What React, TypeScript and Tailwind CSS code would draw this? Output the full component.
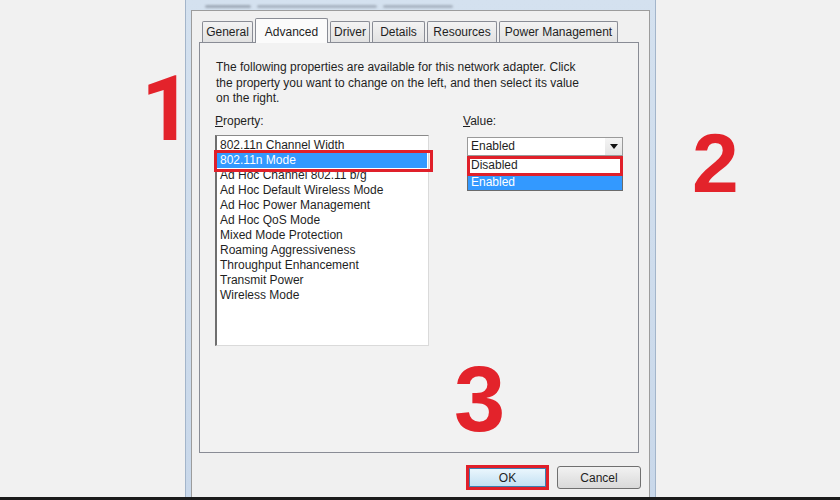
import type { FC } from "react";

const tabs = [
  { label: "General", w: "w-[51px]" },
  { label: "Advanced", w: "w-[73px]", active: true },
  { label: "Driver", w: "w-[40px]" },
  { label: "Details", w: "w-[53px]" },
  { label: "Resources", w: "w-[70px]" },
  { label: "Power Management", w: "w-[119px]" },
];

const properties = [
  "802.11n Channel Width",
  "802.11n Mode",
  "Ad Hoc Channel 802.11 b/g",
  "Ad Hoc Default Wireless Mode",
  "Ad Hoc Power Management",
  "Ad Hoc QoS Mode",
  "Mixed Mode Protection",
  "Roaming Aggressiveness",
  "Throughput Enhancement",
  "Transmit Power",
  "Wireless Mode",
];

const TabStrip: FC = () => (
  <div className="relative z-10 -mb-px flex h-[25px] items-end gap-[2px] pl-[3px]">
    {tabs.map((t) =>
      t.active ? (
        <div
          key={t.label}
          className={`${t.w} flex h-[25px] items-start justify-center rounded-t-[2px] border border-b-0 border-[#898c95] bg-[#fbfbfb] pt-[4px]`}
        >
          {t.label}
        </div>
      ) : (
        <div
          key={t.label}
          className={`${t.w} mb-px flex h-[21px] items-center justify-center rounded-t-[2px] border border-b-0 border-[#898c95] bg-gradient-to-b from-[#f3f3f3] to-[#e2e2e2]`}
        >
          {t.label}
        </div>
      )
    )}
  </div>
);

const PropertyList: FC = () => (
  <div className="flex w-[214px] flex-col">
    <div className="h-[15px] leading-[15px]">
      <span className="underline">P</span>roperty:
    </div>
    <div className="relative mt-[6px] h-[211px] border-l-2 border-t border-r border-b border-l-[#6f6f6f] border-t-[#8a8a8a] border-r-[#dadada] border-b-[#dadada] bg-white pt-[2px]">
      {properties.map((p, i) => (
        <div
          key={p}
          className={`h-[15px] pl-[3px] leading-[15px] ${
            i === 1 ? "mr-px bg-[#3399ff] text-white" : ""
          }`}
        >
          {p}
        </div>
      ))}
      {/* highlight around the selected row */}
      <div className="absolute left-[-3px] top-[14px] h-[22px] w-[219px] border-[3px] border-[#e0202a]" />
    </div>
  </div>
);

const ValueBox: FC = () => (
  <div className="ml-[38px] flex w-[156px] flex-col">
    <div className="-ml-[4px] h-[15px] leading-[15px]">
      <span className="underline">V</span>alue:
    </div>
    <div className="mt-[8px] flex h-[19px] items-center border border-[#9a9a9a] bg-white">
      <div className="flex-1 pl-[3px] leading-[15px]">Enabled</div>
      <div className="flex h-full w-[17px] items-center justify-center bg-gradient-to-b from-[#f4f4f4] to-[#e4e4e4]">
        <svg width="8" height="5" viewBox="0 0 8 5">
          <path d="M0 0 H8 L4 5 Z" fill="#111" />
        </svg>
      </div>
    </div>
    <div className="relative border border-t-0 border-[#6b6b6b] bg-white">
      <div className="h-[19px] pl-[3px] leading-[19px]">Disabled</div>
      <div className="h-[15px] bg-[#3399ff] pl-[3px] leading-[15px] text-white">Enabled</div>
      <div className="absolute left-[-1px] top-0 h-[20px] w-[156px] border-[3px] border-[#e0202a]" />
    </div>
  </div>
);

const Dialog: FC = () => (
  <div className="flex h-full w-[471px] flex-col border-x border-[#a3b5ca] bg-gradient-to-b from-[#d4e1ef] to-[#c9d8ea] px-[5px]">
    {/* title bar, mostly cropped away */}
    <div className="flex h-[10px] items-end gap-[6px] pb-[2px] pl-[14px]">
      <div className="h-[3px] w-[46px] rounded-full bg-[#7d8794] opacity-60 blur-[1px]" />
      <div className="h-[3px] w-[120px] rounded-full bg-[#7d8794] opacity-50 blur-[1px]" />
      <div className="h-[3px] w-[70px] rounded-full bg-[#7d8794] opacity-50 blur-[1px]" />
    </div>
    <div className="flex flex-1 flex-col border border-b-0 border-[#9c9c9c] bg-[#f0f0f0]">
      <div className="ml-[7px] mr-[10px] mt-[7px] flex flex-col">
        <TabStrip />
        <div className="flex h-[411px] flex-col border border-[#898c95] bg-[#f2f2f2] pl-[15px] pt-[17px]">
          <p className="pl-px leading-[15.5px]">
            The following properties are available for this network adapter. Click
            <br />
            the property you want to change on the left, and then select its value
            <br />
            on the right.
          </p>
          <div className="mt-[7px] flex">
            <PropertyList />
            <ValueBox />
          </div>
        </div>
        <div className="-mr-[2px] mt-[12px] flex items-center justify-end gap-[8px]">
          <div className="h-[25px] w-[83px] border-[3px] border-[#e0202a]">
            <button className="flex h-full w-full items-center justify-center border border-[#3c7fb1] bg-gradient-to-b from-[#eaf6fd] to-[#c4e1f3] leading-none">
              OK
            </button>
          </div>
          <button className="flex h-[23px] w-[84px] items-center justify-center rounded-[3px] border border-[#707070] bg-gradient-to-b from-[#f2f2f2] to-[#d9d9d9] leading-none">
            Cancel
          </button>
        </div>
      </div>
    </div>
  </div>
);

export default function App() {
  return (
    <div className="relative flex h-[500px] w-[840px] flex-col overflow-hidden bg-[#f1f1f1] font-['Liberation_Sans',Arial,sans-serif] text-[12px] text-[#1f1f1f]">
      <div className="flex h-[497px] pl-[185px]">
        <Dialog />
      </div>
      <div className="h-[3px] bg-[#1b1b1b]" />

      {/* step numbers */}
      <div className="absolute left-[141px] top-[65px] font-['Roboto',sans-serif] text-[90px] font-bold leading-none text-[#e3232b]">1</div>
      <div className="absolute left-[692px] top-[121px] text-[84px] font-bold leading-none text-[#e3232b]">2</div>
      <div className="absolute left-[454px] top-[353px] text-[92px] font-bold leading-none text-[#e3232b]">3</div>
    </div>
  );
}
